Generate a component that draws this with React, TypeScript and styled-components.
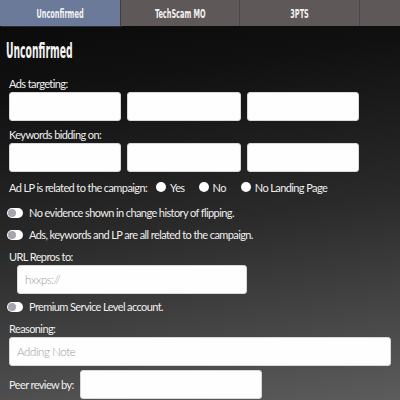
import React from "react";
import styled, { createGlobalStyle } from "styled-components";

const Global = createGlobalStyle`
  html, body { margin: 0; padding: 0; background: #0b0a0b; }
  body { width: 400px; height: 400px; overflow: hidden; font-family: "Lato", "Open Sans", sans-serif; }
  * { box-sizing: border-box; }
`;

const Page = styled.div`
  width: 400px;
  height: 400px;
  display: flex;
  flex-direction: column;
  background: linear-gradient(172deg, #0a090a 0%, #111011 20%, #2a2a2a 55%, #5c5c5c 100%);
  overflow: hidden;
`;

const TabBar = styled.div`
  display: flex;
  height: 26px;
  background: #5e5858;
  flex-shrink: 0;
`;

const Tab = styled.div<{ $active?: boolean; $w: number }>`
  width: ${(p) => p.$w}px;
  display: flex;
  align-items: center;
  justify-content: center;
  background: ${(p) => (p.$active ? "#6b7a98" : "#5e5858")};
  border-right: 1px solid ${(p) => (p.$active ? "#3a3f4a" : "#4a4450")};
  box-shadow: ${(p) => (p.$active ? "1px 1px 0 #2b2b33" : "none")};
`;

const TabText = styled.span`
  display: inline-block;
  color: #f2f2f2;
  font-family: "DejaVu Sans Condensed", sans-serif;
  font-weight: bold;
  font-size: 13px;
  transform: scaleX(0.56);
  white-space: nowrap;
`;

const Content = styled.div`
  display: flex;
  flex-direction: column;
  padding: 13px 9px 0 9px;
  color: #efefef;
  font-size: 11px;
  letter-spacing: -0.6px;
`;

const Heading = styled.h1`
  margin: 0 0 0 -3px;
  font-family: "DejaVu Sans Condensed", sans-serif;
  font-weight: bold;
  font-size: 21px;
  letter-spacing: 0;
  color: #f4f4f4;
  line-height: 24px;
  transform: scaleX(0.49);
  transform-origin: left;
  white-space: nowrap;
`;

const Label = styled.div<{ $mt?: number }>`
  line-height: 15px;
  margin-top: ${(p) => p.$mt ?? 0}px;
`;

const InputRow = styled.div`
  display: grid;
  grid-template-columns: 112px 114px 112px;
  gap: 6px;
  margin-top: 1px;
`;

const Input = styled.div<{ $w?: number; $ml?: number; $mt?: number }>`
  height: 29px;
  flex-shrink: 0;
  width: ${(p) => (p.$w ? `${p.$w}px` : "auto")};
  margin-left: ${(p) => p.$ml ?? 0}px;
  margin-top: ${(p) => p.$mt ?? 0}px;
  background: #fefefe;
  border-radius: 3px;
  border: 1px solid #d8d8d8;
  display: flex;
  align-items: center;
  padding-left: 7px;
  color: #9a9a9a;
  font-weight: 300;
  font-size: 11.5px;
  letter-spacing: -0.4px;
`;

const RadioRow = styled.div`
  display: flex;
  align-items: center;
  margin-top: 7px;
  height: 16px;
`;

const Radio = styled.span`
  width: 10px;
  height: 10px;
  border-radius: 50%;
  background: #fff;
  margin: 0 4px 0 0;
`;

const RadioOpt = styled.span<{ $ml: number }>`
  display: flex;
  align-items: center;
  margin-left: ${(p) => p.$ml}px;
`;

const ToggleRow = styled.div<{ $mt: number }>`
  display: flex;
  align-items: center;
  gap: 6px;
  margin-top: ${(p) => p.$mt}px;
  margin-left: -2px;
  line-height: 15px;
`;

const Toggle = styled.span`
  width: 16px;
  height: 10px;
  border-radius: 5px;
  background: #fff;
  display: flex;
  align-items: center;
  padding-left: 1px;
  &::after {
    content: "";
    width: 8px;
    height: 8px;
    border-radius: 50%;
    background: #a3a6ad;
  }
`;

const PeerRow = styled.div`
  display: flex;
  align-items: center;
  margin-top: 4px;
`;

const PeerLabel = styled.span`
  width: 71px;
  flex-shrink: 0;
`;

export default function App() {
  return (
    <>
      <Global />
      <Page>
        <TabBar>
          <Tab $active $w={121}><TabText>Unconfirmed</TabText></Tab>
          <Tab $w={119}><TabText>TechScam MO</TabText></Tab>
          <Tab $w={120}><TabText>3PTS</TabText></Tab>
        </TabBar>
        <Content>
          <Heading>Unconfirmed</Heading>
          <Label $mt={13}>Ads targeting:</Label>
          <InputRow>
            <Input />
            <Input />
            <Input />
          </InputRow>
          <Label $mt={6}>Keywords bidding on:</Label>
          <InputRow>
            <Input />
            <Input />
            <Input />
          </InputRow>
          <RadioRow>
            <span>Ad LP is related to the campaign:</span>
            <RadioOpt $ml={9}><Radio />Yes</RadioOpt>
            <RadioOpt $ml={14}><Radio />No</RadioOpt>
            <RadioOpt $ml={15}><Radio />No Landing Page</RadioOpt>
          </RadioRow>
          <ToggleRow $mt={10}><Toggle />No evidence shown in change history of flipping.</ToggleRow>
          <ToggleRow $mt={7}><Toggle />Ads, keywords and LP are all related to the campaign.</ToggleRow>
          <Label $mt={7}>URL Repros to:</Label>
          <Input $w={230} $ml={8} $mt={1}>hxxps://</Input>
          <ToggleRow $mt={5}><Toggle />Premium Service Level account.</ToggleRow>
          <Label $mt={7}>Reasoning:</Label>
          <Input $mt={1}>Adding Note</Input>
          <PeerRow>
            <PeerLabel>Peer review by:</PeerLabel>
            <Input $w={182} />
          </PeerRow>
        </Content>
      </Page>
    </>
  );
}
